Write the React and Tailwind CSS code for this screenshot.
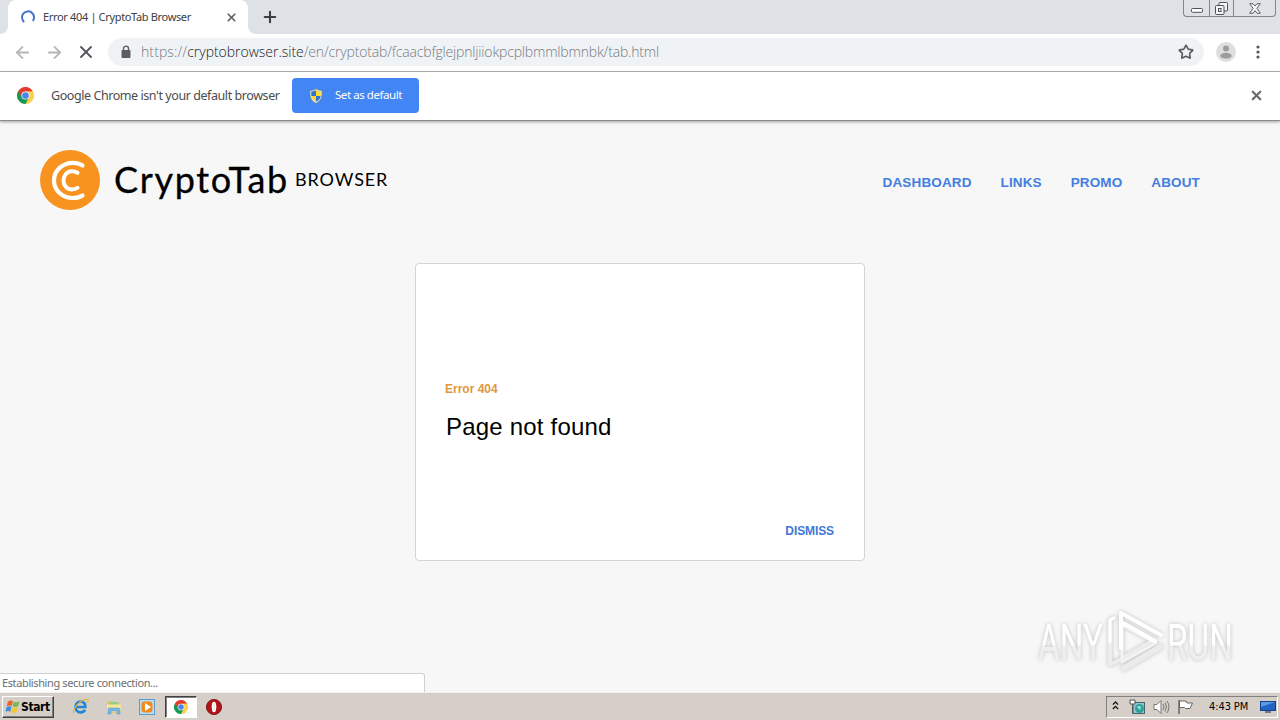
import { Star, Plus, X, ArrowLeft, ArrowRight } from 'lucide-react';

const navLinks = ['DASHBOARD', 'LINKS', 'PROMO', 'ABOUT'];

function ChromeIcon({ className }) {
    return (
        <svg className={className} viewBox="0 0 48 48">
            <path d="M24 24 L3.2 12 A24 24 0 0 1 44.8 12 Z" fill="#e33b2e" />
            <path d="M24 24 L44.8 12 A24 24 0 0 1 24 48 Z" fill="#fcd04b" />
            <path d="M24 24 L24 48 A24 24 0 0 1 3.2 12 Z" fill="#159a55" />
            <path d="M24 13 L44.8 12 L34 29 Z" fill="#fcd04b" />
            <path d="M14 29 L3.2 12 L24 13 Z" fill="#e33b2e" />
            <path d="M34 29 L24 48 L14 29 Z" fill="#159a55" />
            <circle cx="24" cy="24" r="11.5" fill="#fff" />
            <circle cx="24" cy="24" r="9.5" fill="#4a86e8" />
        </svg>
    );
}

function ShieldIcon() {
    return (
        <svg className="w-[14px] h-[16px]" viewBox="0 0 14 16">
            <path d="M7 .7 C5 2 3 2.4 1 2.4 C.4 8 1.5 13 7 15.3 C12.5 13 13.6 8 13 2.4 C11 2.4 9 2 7 .7Z" fill="#d8e6ee" stroke="#6f8494" strokeWidth=".8" />
            <path d="M7 2.2 C5.5 3 4 3.5 2.3 3.6 V8 H7Z" fill="#2f74c9" />
            <path d="M7 2.2 C8.5 3 10 3.5 11.7 3.6 V8 H7Z" fill="#ffd92e" />
            <path d="M2.3 8 H7 V13.8 C4.3 12.5 2.7 10.6 2.3 8Z" fill="#ffd92e" />
            <path d="M11.7 8 H7 V13.8 C9.7 12.5 11.3 10.6 11.7 8Z" fill="#2f74c9" />
        </svg>
    );
}

function TabStrip() {
    return (
        <div className="h-[34px] bg-[#dee1e6] flex items-start shrink-0">
            <div className="w-2 h-full flex items-end">
                <div className="w-2 h-2 bg-white">
                    <div className="w-2 h-2 bg-[#dee1e6] rounded-br-lg" />
                </div>
            </div>
            <div className="w-[240px] h-full bg-white rounded-t-lg flex items-center pl-[13px] pr-[10px]">
                <svg className="w-[14px] h-[14px]" viewBox="0 0 14 14">
                    <path d="M3.2 12 A6 6 0 1 1 11.8 11" fill="none" stroke="#4775cf" strokeWidth="2" />
                </svg>
                <span className="ml-2 flex-1 whitespace-nowrap text-[11px] tracking-[-0.34px] text-[#3c4043] font-['Noto_Sans',sans-serif]">
                    Error 404 | CryptoTab Browser
                </span>
                <X className="w-[13px] h-[13px] text-[#5f6368]" strokeWidth={3.2} />
            </div>
            <div className="w-2 h-full flex items-end">
                <div className="w-2 h-2 bg-white">
                    <div className="w-2 h-2 bg-[#dee1e6] rounded-bl-lg" />
                </div>
            </div>
            <Plus className="ml-[5px] mt-2 w-[18px] h-[18px] text-[#3c4043]" strokeWidth={2.8} />
            <div className="ml-auto mr-1 w-[93px] h-[17px] flex border border-t-0 border-[#7f848d] rounded-b-[4px] text-[#4b505a]">
                <div className="w-[25px] flex justify-center pt-[8px]">
                    <svg className="w-3 h-[5px]" viewBox="0 0 12 5">
                        <rect x=".5" y=".5" width="11" height="3.8" rx="1" fill="#fff" stroke="currentColor" />
                    </svg>
                </div>
                <div className="w-[25px] flex justify-center pt-[2px] border-x border-[#7f848d]">
                    <svg className="w-[13px] h-[13px]" viewBox="0 0 13 13" fill="#f4f5f7" stroke="currentColor">
                        <rect x="4" y=".5" width="8.5" height="8.5" rx="1" />
                        <rect x=".5" y="3.5" width="8.5" height="9" rx="1" />
                        <rect x="3.5" y="6.5" width="2.5" height="3" />
                    </svg>
                </div>
                <div className="flex-1 flex justify-center pt-[3px]">
                    <svg className="w-3 h-[11px]" viewBox="0 0 12 11">
                        <path d="M.7 .7 H4 L6 3 L8 .7 H11.3 L7.9 5.3 L11.3 10.3 H8 L6 7.6 L4 10.3 H.7 L4.1 5.3Z" fill="#f8f8f9" stroke="currentColor" strokeWidth=".9" />
                    </svg>
                </div>
            </div>
        </div>
    );
}

function Toolbar() {
    return (
        <div className="h-[38px] bg-white border-b border-[#b3b3b5] flex items-center shrink-0 pl-[13px] pb-px">
            <ArrowLeft className="w-[19px] h-[19px] text-[#b4b6b9]" strokeWidth={2.3} />
            <ArrowRight className="ml-[13px] w-[19px] h-[19px] text-[#b4b6b9]" strokeWidth={2.3} />
            <X className="ml-[12px] w-[20px] h-[20px] text-[#55585c]" strokeWidth={2.3} />
            <div className="ml-[12px] w-[1096px] h-7 rounded-full bg-[#f0f3f6] flex items-center pl-[12px] pr-[10px]">
                <svg className="w-[12px] h-[14px]" viewBox="0 0 12 14">
                    <rect x="1.5" y="5" width="9" height="8" rx="1" fill="#5a5d61" />
                    <path d="M3.5 6 V3.6 A2.5 2.5 0 0 1 8.5 3.6 V6" fill="none" stroke="#5a5d61" strokeWidth="1.4" />
                </svg>
                <span className="ml-[9px] pb-px flex-1 whitespace-nowrap text-[14px] tracking-[-0.17px] text-[#75797e] font-light font-['Open_Sans',sans-serif]">
                    <span className="tracking-[0.1px]">https://</span>
                    <span className="text-[#202124] tracking-[-0.02px]">cryptobrowser.site</span>/en/cryptotab/fcaacbfglejpnljiiokpcplbmmlbmnbk/tab.html
                </span>
                <Star className="w-[16px] h-[16px] text-[#5a5d61]" strokeWidth={2.5} />
            </div>
            <svg className="ml-[12px] w-5 h-5" viewBox="0 0 20 20">
                <circle cx="10" cy="10" r="10" fill="#dedede" />
                <circle cx="10" cy="6.5" r="3" fill="#9d9d9d" />
                <ellipse cx="10" cy="13.7" rx="5.8" ry="2.9" fill="#9d9d9d" />
            </svg>
            <svg className="ml-[20px] w-1 h-[14px]" viewBox="0 0 4 14" fill="#55585c">
                <circle cx="2" cy="2" r="1.6" />
                <circle cx="2" cy="7" r="1.6" />
                <circle cx="2" cy="12" r="1.6" />
            </svg>
        </div>
    );
}

function DefaultBrowserBar() {
    return (
        <div className="h-[49px] bg-white border-b border-[#8c8c8c] flex items-center shrink-0 pl-[17px] pr-[17px] pb-px shadow-[0_1px_3px_rgba(0,0,0,0.35)]">
            <ChromeIcon className="w-[17px] h-[17px]" />
            <span className="ml-[17px] pt-px w-[241px] whitespace-nowrap text-[12.5px] tracking-[-0.43px] text-[#4c4c4c] font-['Noto_Sans',sans-serif]">
                Google Chrome isn't your default browser
            </span>
            <button className="w-[127px] h-[35px] rounded-[4px] bg-[#4285f4] text-white flex items-center pl-[17px] text-[11.5px] whitespace-nowrap font-['Noto_Sans',sans-serif]">
                <ShieldIcon />
                <span className="ml-[12px] pb-px tracking-[-0.44px]">Set as default</span>
            </button>
            <X className="ml-auto mr-[-1px] w-[15px] h-[15px] text-[#66696d]" strokeWidth={3.4} />
        </div>
    );
}

function SiteHeader() {
    return (
        <header className="flex items-center justify-between h-[60px] mt-[29px] pl-10 pr-20">
            <div className="flex items-center">
                <svg className="w-[60px] h-[60px]" viewBox="0 0 60 60" fill="none" stroke="#fff" strokeLinecap="round">
                    <circle cx="30" cy="30" r="30" fill="#f7931e" stroke="none" />
                    <path d="M42.5 15.5 C39.5 13.5 36 12.8 33 12.8 C22.5 12.8 14 20.5 14 30.5 C14 40.5 22.5 48 33 48 C36.5 48 40 47.2 42.5 45.5" strokeWidth="4.2" />
                    <path d="M37.5 22.8 C35.5 21.5 33.5 21.2 32 21.2 C27 21.2 23.5 25.5 23.5 30.5 C23.5 35.5 27 39.5 32 39.5 C34 39.5 36 39 37.5 37.8" strokeWidth="4" />
                </svg>
                <span className="ml-[14px] pb-[2px] w-[181px] whitespace-nowrap text-[36px] leading-[58px] text-black tracking-[1.7px] [-webkit-text-stroke:0.3px_#000] font-['Lato',sans-serif]">
                    CryptoTab
                </span>
                <span className="pb-px text-[18px] text-black tracking-[0.9px] font-['Lato',sans-serif]">BROWSER</span>
            </div>
            <nav className="flex gap-[29px] pt-[6px] text-[13.5px] font-bold tracking-[0.13px] text-[#437ee0] font-['Liberation_Sans',sans-serif]">
                {navLinks.map((link) => (
                    <a key={link}>{link}</a>
                ))}
            </nav>
        </header>
    );
}

function ErrorCard() {
    return (
        <div className="mt-[53px] mx-auto w-[450px] h-[298px] bg-white border border-[#d4d4d4] rounded-[4px] flex flex-col px-[29px] font-['Liberation_Sans',sans-serif]">
            <p className="mt-[117px] text-[12px] leading-4 font-bold text-[#e0973b]">Error 404</p>
            <h1 className="mt-[14px] ml-[1px] text-[24px] leading-8 text-black tracking-[0.2px]">Page not found</h1>
            <button className="mt-auto mb-[21px] self-end mr-[1px] text-[12px] leading-4 font-bold tracking-[-0.1px] text-[#3f78d6]">DISMISS</button>
        </div>
    );
}

function Watermark() {
    return (
        <svg className="absolute left-[1030px] top-[600px] w-[230px] h-[90px] drop-shadow-[0_0_2px_rgba(0,0,0,0.22)]" viewBox="0 0 230 90">
            <defs>
                <linearGradient id="fade" x1="0" y1="0" x2="0" y2="1">
                    <stop offset="0.52" stopColor="#fff" />
                    <stop offset="0.56" stopColor="#efefef" />
                </linearGradient>
            </defs>
            <g fill="url(#fade)" fontFamily="Roboto, sans-serif" fontSize="49">
                <text transform="translate(8 60) scale(0.68 1)">ANY</text>
                <text transform="translate(137 60) scale(0.68 1)">RUN</text>
            </g>
            <g fill="none" strokeLinecap="round" strokeLinejoin="round">
                <path d="M84 18 L80 20 V64 L86 62 L124 40" stroke="#ececec" strokeWidth="4" />
                <path d="M84 18 L80 20 V42" stroke="#fff" strokeWidth="3" />
                <path d="M92 25 L126 43 L92 62 Z" stroke="#f3f3f3" strokeWidth="3" />
                <path d="M94 68 L130 47" stroke="#ebebeb" strokeWidth="6" />
                <path d="M91 48 V13 L131 35 M93 23 L125 41" stroke="#fff" strokeWidth="4" />
            </g>
        </svg>
    );
}

function IEIcon() {
    return (
        <svg className="w-[17px] h-[17px]" viewBox="0 0 17 17" fill="none">
            <path d="M3.5 9 H13.3 C13.3 5.5 11.5 3.6 8.7 3.6 C5.6 3.6 3.5 5.9 3.5 9 C3.5 12.2 5.6 14.3 8.7 14.3 C10.7 14.3 12.3 13.4 13 11.7" stroke="#2385d7" strokeWidth="2.7" />
            <path d="M2 15.5 C-1 12 10 0 15.5 1.5 C16.5 2 16.2 3.3 15.5 4.5" stroke="#e5b93f" strokeWidth="1.3" />
        </svg>
    );
}

function FolderIcon() {
    return (
        <svg className="w-[16px] h-[16px]" viewBox="0 0 16 16">
            <path d="M1 2 H6 L7 3.5 H14 V14 H1Z" fill="#e8c765" />
            <rect x="3" y="3" width="9" height="3" fill="#8fce8b" />
            <path d="M1 5.5 H15 V13 H1Z" fill="#f8e69a" />
            <path d="M2 15 V10.5 Q2 9 3.5 9 H12.5 Q14 9 14 10.5 V15 H11 V12 H5 V15Z" fill="#75b8e5" stroke="#4a91c4" strokeWidth=".5" />
        </svg>
    );
}

function PlayerIcon() {
    return (
        <svg className="w-[16px] h-[16px]" viewBox="0 0 16 16">
            <rect x=".5" y=".5" width="15" height="15" fill="#b9dcf1" stroke="#5b9dcc" />
            <rect x="2.5" y="2.5" width="11" height="11" rx="3" fill="#f08a1c" />
            <path d="M6 4 L12 8 L6 12Z" fill="#fff" />
        </svg>
    );
}

function OperaIcon() {
    return (
        <svg className="w-[16px] h-[16px]" viewBox="0 0 16 16">
            <circle cx="8" cy="8" r="7.6" fill="#b31217" stroke="#6d090c" strokeWidth=".8" />
            <ellipse cx="8" cy="8" rx="2.3" ry="5.3" fill="#fff" />
            <path d="M8 4 V12" stroke="#ddd" />
        </svg>
    );
}

function Taskbar() {
    return (
        <div className="h-[28px] bg-[#d5cfc7] border-t border-[#f3f1ee] flex items-center shrink-0 font-['DejaVu_Sans_Condensed','DejaVu_Sans',sans-serif]">
            <button className="ml-[2px] w-[52px] h-[22px] flex items-center pl-[2px] border border-t-white border-l-white border-b-[#404040] border-r-[#404040] shadow-[inset_-1px_-1px_0_#808080]">
                <svg className="w-[16px] h-[16px]" viewBox="0 0 15 16">
                    <path d="M2.5 2.5 C4.5 1 6 1.2 7.5 2.2 L6.2 7 C4.5 6 3 6.3 1.2 7.4Z" fill="#ee6232" />
                    <path d="M8.3 2.6 C10 3.6 12 3.5 14 2.3 L12.6 7.3 C10.8 8.4 9 8.3 7 7.3Z" fill="#76b852" />
                    <path d="M1 8.2 C3 7 4.5 7 6 8 L4.6 12.7 C3 11.7 1.5 12 0 13Z" fill="#3c8fdd" />
                    <path d="M6.8 8.3 C8.5 9.3 10.4 9.2 12.3 8.2 L11 13 C9 14.3 7.3 14.1 5.5 13Z" fill="#f5c534" />
                </svg>
                <span className="text-[12px] font-bold text-black tracking-[-0.4px]">Start</span>
            </button>
            <div className="ml-[18px] flex items-center gap-[17px]">
                <IEIcon />
                <FolderIcon />
                <PlayerIcon />
            </div>
            <div className="ml-[10px] w-[32px] h-[22px] bg-white border border-t-[#404040] border-l-[#404040] border-b-white border-r-white shadow-[inset_1px_1px_0_#808080] flex items-center justify-center">
                <ChromeIcon className="w-[14px] h-[14px]" />
            </div>
            <div className="ml-[9px]">
                <OperaIcon />
            </div>
            <div className="ml-auto w-[172px] h-[22px] mr-[2px] flex items-center pl-[5px] border border-t-[#808080] border-l-[#808080] border-b-white border-r-white">
                <svg className="w-[7px] h-[9px] mb-[2px]" viewBox="0 0 8 10" fill="none" stroke="#111" strokeWidth="1.5">
                    <path d="M1 4 L4 1 L7 4 M1 9 L4 6 L7 9" />
                </svg>
                <svg className="ml-[10px] w-[16px] h-[16px]" viewBox="0 0 16 16">
                    <rect x="4" y="3.5" width="11.5" height="11" fill="#8fc6d0" stroke="#47636b" />
                    <circle cx="10.5" cy="9.5" r="4.5" fill="#32a39a" />
                    <path d="M8 8 Q10 6 12 8 L11 11 Z" fill="#a6e3cf" />
                    <path d="M1 1 H6 V5 H1Z M3.5 5 V14.5" fill="#fff" stroke="#555" />
                </svg>
                <svg className="ml-[8px] w-[17px] h-[16px]" viewBox="0 0 17 16" fill="none" stroke="#777" strokeWidth="1">
                    <path d="M1 5.5 H4 L8 1.5 V14.5 L4 10.5 H1Z" fill="#fff" />
                    <path d="M10 5 Q12 8 10 11 M12 3.5 Q15 8 12 12.5 M14 2 Q18 8 14 14" />
                </svg>
                <svg className="ml-[7px] w-[17px] h-[16px]" viewBox="0 0 17 16">
                    <path d="M2 1 V15" stroke="#666" strokeWidth="1.5" />
                    <path d="M2.5 2 H9 L10 4 H15.5 L13 9.5 H8.5 L7.5 8.5 H2.5Z" fill="#fff" stroke="#666" />
                </svg>
                <span className="ml-[15px] pt-[2px] text-[11px] text-black whitespace-nowrap tracking-[-0.1px]">4:43 PM</span>
                <svg className="ml-auto mr-[1px] w-[16px] h-[14px]" viewBox="0 0 16 14">
                    <rect x=".5" y="1.5" width="15" height="9" fill="#2264c2" stroke="#15408b" />
                    <path d="M1 2 H15 L1 7Z" fill="#5a9ae4" />
                    <path d="M5 12 H11" stroke="#4c5f78" strokeWidth="1.5" />
                </svg>
            </div>
        </div>
    );
}

export default function App() {
    return (
        <div className="relative w-[1280px] h-[720px] overflow-hidden flex flex-col bg-[#f7f7f7]">
            <TabStrip />
            <Toolbar />
            <DefaultBrowserBar />
            <main className="flex-1 flex flex-col">
                <SiteHeader />
                <ErrorCard />
                <div className="mt-auto w-[425px] h-[19px] pl-[2px] bg-white border-t border-r border-[#d0d0d0] rounded-tr-[3px] text-[11px] leading-[18px] tracking-[-0.38px] text-[#6b6e72] whitespace-nowrap font-['Noto_Sans',sans-serif]">
                    Establishing secure connection...
                </div>
            </main>
            <Taskbar />
            <Watermark />
        </div>
    );
}
